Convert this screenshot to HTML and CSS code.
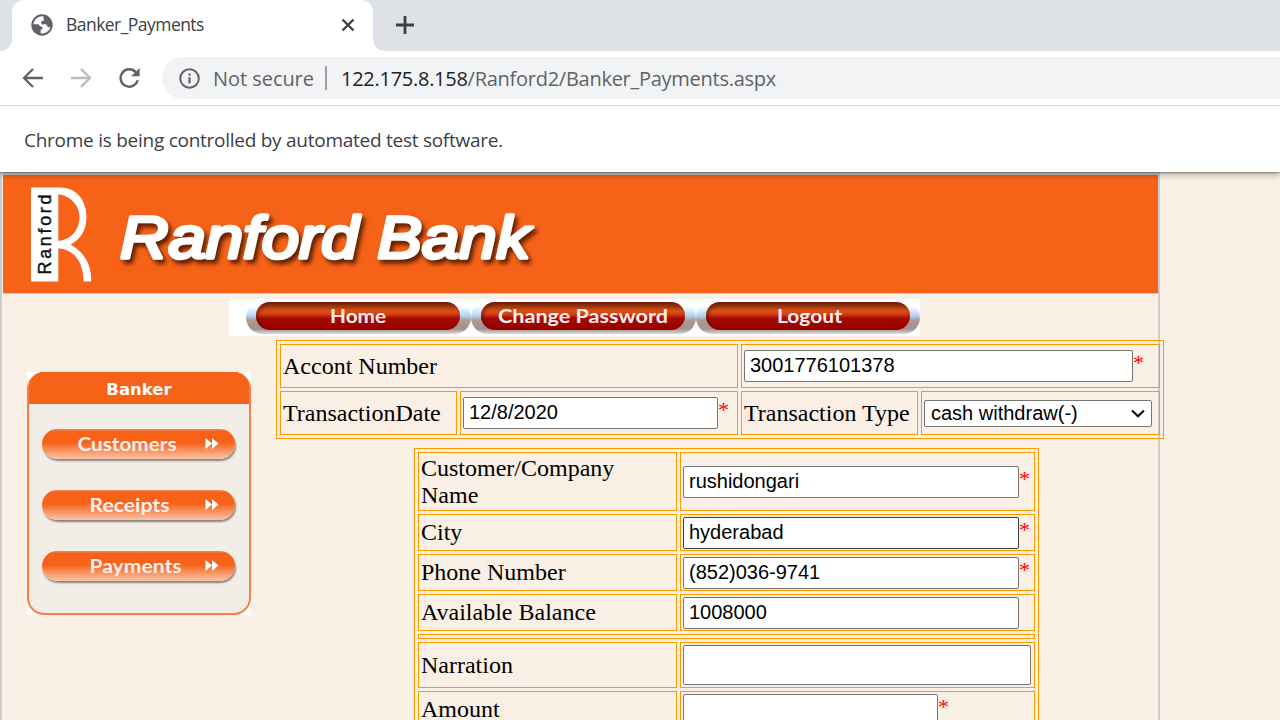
FILE: index.html
```html
<!DOCTYPE html>
<html lang="en">
<head>
<meta charset="utf-8">
<title>Banker_Payments</title>
<link rel="stylesheet" href="styles.css">
</head>
<body>
<div class="browser">
  <div class="tabstrip">
    <div class="strip-left"></div>
    <div class="tab">
      <svg class="globe" width="22" height="22" viewBox="0 0 22 22"><circle cx="11" cy="11" r="10.7" fill="#5f6368"/><path d="M12.5 2.4C8 1.8 3.3 4.800 2.400 10.300L6.800 10.300C8 10.300 8.600 11.200 8.600 12.300C10 12 11.500 12.700 11.600 14.200C11.600 15.200 10.800 15.400 9.700 15.500L9.700 19.400C14 20 18.400 17.500 19.500 13C17.500 14 15.800 12.600 15.600 10.800C14.500 9.400 12 11.400 10.600 9.900C9.500 8.600 10.500 6.600 12.300 6.800C13.500 6.700 12.300 5 12.500 2.400Z" fill="#fff"/></svg>
      <span class="tab-title">Banker_Payments</span>
      <svg class="tab-close" width="14" height="14" viewBox="0 0 14 14"><path d="M1.500 1.500L12.500 12.500M12.500 1.500L1.500 12.500" stroke="#3c4043" stroke-width="2.300"/></svg>
    </div>
    <div class="strip-rest">
      <svg width="18" height="18" viewBox="0 0 18 18"><path d="M9 0V18M0 9H18" stroke="#3c4043" stroke-width="2.800"/></svg>
    </div>
  </div>
  <div class="toolbar">
    <svg class="nav-icon" width="22" height="20" viewBox="0 0 22 20"><path d="M21 10H2.500M11 1L2 10L11 19" fill="none" stroke="#5f6368" stroke-width="2.300"/></svg>
    <svg class="nav-icon" width="22" height="20" viewBox="0 0 22 20"><path d="M1 10H19.500M11 1L20 10L11 19" fill="none" stroke="#babcbe" stroke-width="2.300"/></svg>
    <svg class="nav-icon" width="22" height="20" viewBox="0 0 22 20"><path d="M19.700 12.300A8.700 8.700 0 1 1 17.800 4.200" fill="none" stroke="#5f6368" stroke-width="2.400"/><path d="M21.600 0V8.300H13.300Z" fill="#5f6368"/></svg>
    <div class="omnibox">
      <svg width="21" height="21" viewBox="0 0 21 21"><circle cx="10.500" cy="10.500" r="9.300" fill="none" stroke="#5f6368" stroke-width="2"/><path d="M10.500 9.300V15.500M10.500 5.500V7.700" stroke="#5f6368" stroke-width="2.200"/></svg>
      <span class="security">Not secure</span>
      <span class="divider"></span>
      <span class="url"><b>122.175.8.158</b>/Ranford2/Banker_Payments.aspx</span>
    </div>
  </div>
  <div class="infobar">Chrome is being controlled by automated test software.</div>
</div>

<main class="frame">
  <header class="banner">
    <svg width="560" height="118" viewBox="3 175 560 118">
      <rect x="31" y="187.500" width="27.300" height="94" fill="#fff"/>
      <path d="M57 187.500C78 186 86.500 202 86.500 217C86.500 232 79 240 70.500 244.500C84 252 91.500 264 91.200 281.500H83.500C83.500 262 74 249 57 248.300V241C72 240 79.500 229 79.500 217C79.500 205 70 195 57 194.200Z" fill="#fff"/>
      <text class="logo-side" transform="translate(50.800 274.500) rotate(-90)" textLength="80">Ranford</text>
      <text class="logo-name" x="120" y="257.500" textLength="410" lengthAdjust="spacingAndGlyphs">Ranford Bank</text>
    </svg>
  </header>
  <nav class="topnav">
    <div class="nav-cell"><a class="pill"><svg width="203" height="28"><text x="74" y="21" textLength="56" lengthAdjust="spacingAndGlyphs">Home</text></svg></a></div>
    <div class="nav-cell"><a class="pill"><svg width="203" height="28"><text x="17" y="21" textLength="170" lengthAdjust="spacingAndGlyphs">Change Password</text></svg></a></div>
    <div class="nav-cell"><a class="pill"><svg width="203" height="28"><text x="71" y="21" textLength="65" lengthAdjust="spacingAndGlyphs">Logout</text></svg></a></div>
  </nav>
  <div class="content">
    <aside class="side">
      <div class="side-box">
        <div class="side-title">Banker</div>
        <a class="side-btn"><svg width="192" height="30"><text x="35.500" y="22" textLength="99" lengthAdjust="spacingAndGlyphs">Customers</text><path d="M163.500 9L170 14.500L163.500 20ZM170 9L176.500 14.500L170 20Z"/></svg></a>
        <a class="side-btn"><svg width="192" height="30"><text x="47.500" y="22" textLength="80" lengthAdjust="spacingAndGlyphs">Receipts</text><path d="M163.500 9L170 14.500L163.500 20ZM170 9L176.500 14.500L170 20Z"/></svg></a>
        <a class="side-btn"><svg width="192" height="30"><text x="47.500" y="22" textLength="92" lengthAdjust="spacingAndGlyphs">Payments</text><path d="M163.500 9L170 14.500L163.500 20ZM170 9L176.500 14.500L170 20Z"/></svg></a>
      </div>
    </aside>
    <div class="forms">
      <section class="sheet account">
        <div class="cell wide">Accont Number</div>
        <div class="cell wide field acct"><input class="w389" value="3001776101378"><i>*</i></div>
        <div class="cell">TransactionDate</div>
        <div class="cell field date"><input class="w255" value="12/8/2020"><i>*</i></div>
        <div class="cell">Transaction Type</div>
        <div class="cell field type"><div class="select">cash withdraw(-)<svg width="14" height="9" viewBox="0 0 14 9"><path d="M1 1.500L7 7.300L13 1.500" fill="none" stroke="#111" stroke-width="2.200"/></svg></div></div>
      </section>
      <section class="sheet customer">
        <div class="cell">Customer/Company Name</div>
        <div class="cell field name"><input class="w336" value="rushidongari"><i>*</i></div>
        <div class="cell">City</div>
        <div class="cell field"><input class="w336 hovered" value="hyderabad"><i>*</i></div>
        <div class="cell">Phone Number</div>
        <div class="cell field"><input class="w336" value="(852)036-9741"><i>*</i></div>
        <div class="cell">Available Balance</div>
        <div class="cell field"><input class="w336" value="1008000"></div>
        <div class="cell wide"></div>
        <div class="cell">Narration</div>
        <div class="cell field"><textarea class="note"></textarea></div>
        <div class="cell">Amount</div>
        <div class="cell field"><input class="w255"><i>*</i></div>
      </section>
    </div>
  </div>
</main>
</body>
</html>
```
FILE: styles.css
```css
* { box-sizing: border-box; }
html, body { height: 720px; overflow: hidden; }
body {
  margin: 0;
  width: 1280px;
  background: #faefe4;
  font-family: "Liberation Serif", "Times New Roman", serif;
  font-size: 24px;
  color: #000;
}
svg { display: block; flex: none; }

/* Browser chrome */
.browser {
  position: relative;
  z-index: 1;
  height: 172px;
  background: #fff;
  font-family: "Open Sans", "Noto Sans", sans-serif;
  box-shadow: 0 1px 1px rgba(0,0,0,.2), 0 2px 7px rgba(0,0,0,.38);
}
.tabstrip { display: flex; height: 51px; background: #fff; }
.strip-left { width: 12px; background: #dee1e6; border-bottom-right-radius: 12px; }
.tab {
  display: flex;
  align-items: center;
  width: 361px;
  padding: 0 18px 2px 19px;
  background: linear-gradient(#dee1e6 12px, #fff 12px);
  position: relative;
}
.tab::before {
  content: "";
  position: absolute;
  inset: 0;
  background: #fff;
  border-radius: 12px 12px 0 0;
}
.tab > * { position: relative; }
.tab-title { margin-left: 13px; padding-bottom: 1px; font-size: 17.5px; letter-spacing: -.54px; color: #3c4043; }
.tab-close { margin-left: auto; }
.strip-rest { flex: 1; background: #dee1e6; border-bottom-left-radius: 12px; padding: 16px 0 0 23px; }
.toolbar {
  display: flex;
  align-items: center;
  height: 55px;
  padding-left: 22px;
  border-bottom: 1px solid #dcdcdc;
}
.nav-icon { margin-right: 26px; }
.omnibox {
  display: flex;
  align-items: center;
  flex: 1;
  height: 42px;
  margin-left: -4px;
  padding-left: 17px;
  border-radius: 21px 0 0 21px;
  background: #f1f3f4;
  font-size: 20px;
  color: #5f6368;
}
.security { margin-left: 13px; width: 101px; white-space: nowrap; letter-spacing: -.05px; }
.divider { width: 2px; height: 24px; margin: 0 14px 0 11px; background: #9aa0a6; }
.url { white-space: nowrap; letter-spacing: -.27px; }
.url b { font-weight: 400; color: #202124; }
.infobar { height: 66px; padding-left: 24px; line-height: 69px; font-size: 19px; letter-spacing: -.26px; color: #3c4043; }

/* Bank page */
.frame {
  width: 1160px;
  height: 548px;
  border: 2px solid #ccc;
  border-top-width: 3px;
  border-bottom: 0;
}
.banner {
  height: 120px;
  margin-left: 1px;
  background: #f66218;
  border-bottom: 1px solid #fff;
  box-shadow: inset 0 -1px #fbb38c;
}
.logo-side { font: 18px "Liberation Sans", sans-serif; fill: #111; stroke: #111; stroke-width: .4; }
.logo-name {
  font: italic 60px "Liberation Sans", sans-serif;
  fill: #fff;
  stroke: #fff;
  stroke-width: 3.600px;
  stroke-linejoin: round;
  stroke-linecap: round;
  filter: drop-shadow(3px 4px 2px rgba(70,20,0,.85));
}
.topnav {
  display: flex;
  width: 691px;
  height: 37px;
  margin: 4px 0 0 227px;
  padding: 2px 0 0 17px;
  background: #fff;
}
.nav-cell {
  width: 225px;
  flex: none;
  height: 33px;
  padding: 1px 0 0 10px;
  border-radius: 17px;
  background: linear-gradient(#fff 0 15%, #d8e9fc 30%, #b0d2f8 45%, #b09b94 58%, #a3918c 85%, #ddd);
}
.nav-cell:last-child { width: 224px; }
.pill {
  display: block;
  width: 204px;
  height: 28px;
  border-radius: 14px;
  background: linear-gradient(#772607 0, #9a3810 15%, #df4d13 32%, #d34312 43%, #a40b03 58%, #990000);
  box-shadow: inset 2px 1px 4px rgba(80,10,0,.6);
}
.pill text, .side-btn text { font: bold 19.500px Lato, sans-serif; fill: #ffeef0; }
.content { display: flex; padding: 4px 0 0 25px; }
.side {
  width: 224px;
  height: 243px;
  margin-top: 32px;
  flex: none;
  background: #fff;
}
.side-box {
  display: flex;
  flex-direction: column;
  align-items: center;
  gap: 31px;
  height: 243px;
  border: 2px solid #f77e45;
  border-top: 0;
  border-radius: 17px;
  background: linear-gradient(#f66218 32px, #f2ede6 32px);
  overflow: hidden;
}
.side-title {
  width: 224px;
  height: 32px;
  margin-bottom: -6px;
  flex: none;
  background: #f66218;
  color: #fff;
  font: bold 16.500px/36px "DejaVu Sans", sans-serif;
  text-align: center;
}
.side-btn {
  display: block;
  width: 193px;
  height: 30px;
  margin-left: -2px;
  border-radius: 15px;
  background: linear-gradient(#e88d65 0, #f66218 8%, #f66218 45%, #fac4a8);
  box-shadow: 1px 2px 2px #8a837c;
}
.side-btn path { fill: #fff; }

.forms { margin-left: 25px; flex: none; }
.sheet { display: grid; gap: 3px; padding: 3px; border: 1px solid #ff9900; }
.account { width: 888px; grid-template-columns: 177px 278px 177px 239px; grid-auto-rows: 44px; }
.customer {
  width: 625px;
  margin: 9px 0 0 138px;
  grid-template-columns: 259px 355px;
  grid-template-rows: 59px 37px 37px 37px 5px 46px 37px;
}
.cell { display: flex; align-items: center; padding: 0 2px; border: 1px solid #ff9900; line-height: 27px; min-width: 0; }
.wide { grid-column: span 2; }
.field { align-items: flex-start; padding: 2px; }
.acct, .date { padding-top: 5px; }
.type { padding-top: 8px; }
.name { padding-top: 13px; }
.cell i { font-style: normal; font-size: 22px; color: #f00; line-height: 26px; }
input, textarea, .select {
  height: 32px;
  margin: 0;
  padding: 0 5px 2px;
  border: 1px solid #767676;
  border-radius: 2px;
  background: #fff;
  color: #000;
  font: 20px "Liberation Sans", Arial, sans-serif;
  flex: none;
}
.hovered { border-color: #404040; }
.w389 { width: 389px; }
.w336 { width: 336px; }
.w255 { width: 255px; }
.note { width: 348px; height: 40px; resize: none; overflow: hidden; }
.select {
  display: flex;
  align-items: center;
  justify-content: space-between;
  width: 228px;
  height: 27px;
  padding: 0 6px;
  line-height: 25px;
}
```
